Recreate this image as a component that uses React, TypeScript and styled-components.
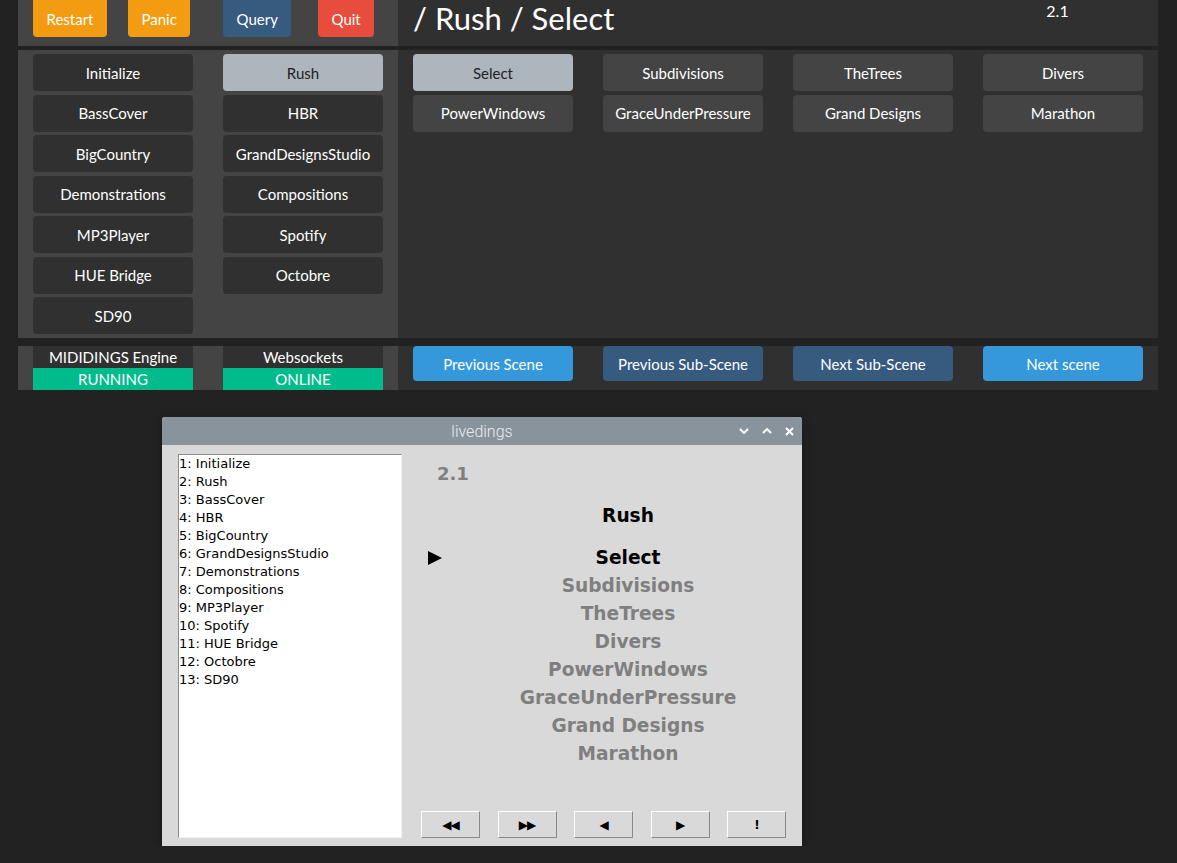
import React from "react";
import styled, { createGlobalStyle } from "styled-components";

type Variant = "warning" | "primary" | "danger" | "info" | "dark" | "secondary" | "light";

const colors: Record<Variant, { bg: string; fg: string }> = {
  warning: { bg: "#f39c12", fg: "#fff" },
  primary: { bg: "#375a7f", fg: "#fff" },
  danger: { bg: "#e74c3c", fg: "#fff" },
  info: { bg: "#3498db", fg: "#fff" },
  dark: { bg: "#303030", fg: "#fff" },
  secondary: { bg: "#444444", fg: "#fff" },
  light: { bg: "#adb5bd", fg: "#222" },
};

const scenes = [
  "Initialize",
  "Rush",
  "BassCover",
  "HBR",
  "BigCountry",
  "GrandDesignsStudio",
  "Demonstrations",
  "Compositions",
  "MP3Player",
  "Spotify",
  "HUE Bridge",
  "Octobre",
  "SD90",
];

const subScenes = [
  "Select",
  "Subdivisions",
  "TheTrees",
  "Divers",
  "PowerWindows",
  "GraceUnderPressure",
  "Grand Designs",
  "Marathon",
];

function App() {
  const currentScene = "Rush";
  const currentSub = "Select";

  return (
    <>
      <GlobalStyle />
      <Shell>
        <Band $h={46} $gap={4}>
          <LeftPanel>
            <ControlGrid>
              <Btn $variant="warning" $h={37} $top>Restart</Btn>
              <Btn $variant="warning" $h={37} $top>Panic</Btn>
              <Btn $variant="primary" $h={37} $top>Query</Btn>
              <Btn $variant="danger" $h={37} $top>Quit</Btn>
            </ControlGrid>
          </LeftPanel>
          <RightPanel>
            <TitleGrid>
              <Title>/ Rush / Select</Title>
              <Version>2.1</Version>
            </TitleGrid>
          </RightPanel>
        </Band>

        <Band $h={288} $gap={8}>
          <LeftPanel>
            <ButtonGrid $cols={2}>
              {scenes.map((s) => (
                <Btn key={s} $variant={s === currentScene ? "light" : "dark"} $h={37}>
                  {s}
                </Btn>
              ))}
            </ButtonGrid>
          </LeftPanel>
          <RightPanel>
            <ButtonGrid $cols={4}>
              {subScenes.map((s) => (
                <Btn key={s} $variant={s === currentSub ? "light" : "secondary"} $h={37}>
                  {s}
                </Btn>
              ))}
            </ButtonGrid>
          </RightPanel>
        </Band>

        <Band $h={44} $gap={0}>
          <LeftPanel>
            <StatusGrid>
              <StatusBox>
                <StatusLabel>MIDIDINGS Engine</StatusLabel>
                <StatusValue>RUNNING</StatusValue>
              </StatusBox>
              <StatusBox>
                <StatusLabel>Websockets</StatusLabel>
                <StatusValue>ONLINE</StatusValue>
              </StatusBox>
            </StatusGrid>
          </LeftPanel>
          <RightPanel>
            <NavGrid>
              <Btn $variant="info" $h={35}>Previous Scene</Btn>
              <Btn $variant="primary" $h={35}>Previous Sub-Scene</Btn>
              <Btn $variant="primary" $h={35}>Next Sub-Scene</Btn>
              <Btn $variant="info" $h={35}>Next scene</Btn>
            </NavGrid>
          </RightPanel>
        </Band>
      </Shell>

      <Window>
        <WindowTitle>
          <span />
          <WindowName>livedings</WindowName>
          <WindowControls>
            <svg width="10" height="6" viewBox="0 0 10 6">
              <path d="M1 1 L5 5 L9 1" fill="none" stroke="#fff" strokeWidth="2" />
            </svg>
            <svg width="10" height="6" viewBox="0 0 10 6">
              <path d="M1 5 L5 1 L9 5" fill="none" stroke="#fff" strokeWidth="2" />
            </svg>
            <svg width="9" height="9" viewBox="0 0 9 9">
              <path d="M1 1 L8 8 M8 1 L1 8" fill="none" stroke="#fff" strokeWidth="2" />
            </svg>
          </WindowControls>
        </WindowTitle>
        <WindowBody>
          <ListBox>
            {scenes.map((s, i) => (
              <ListItem key={s}>
                {i + 1}: {s}
              </ListItem>
            ))}
          </ListBox>
          <ScenePane>
            <PaneVersion>2.1</PaneVersion>
            <SceneRow $gap={14}>
              <span />
              <SceneName $active>Rush</SceneName>
            </SceneRow>
            <SubList>
              {subScenes.map((s) => (
                <SceneRow key={s} $gap={0}>
                  <Marker>
                    {s === currentSub && (
                      <svg width="14" height="14" viewBox="0 0 14 14">
                        <polygon points="0,0 14,7 0,14" fill="#000" />
                      </svg>
                    )}
                  </Marker>
                  <SceneName $active={s === currentSub}>{s}</SceneName>
                </SceneRow>
              ))}
            </SubList>
            <TkButtons>
              <TkButton>◀◀</TkButton>
              <TkButton>▶▶</TkButton>
              <TkButton>◀</TkButton>
              <TkButton>▶</TkButton>
              <TkButton>!</TkButton>
            </TkButtons>
          </ScenePane>
        </WindowBody>
      </Window>
    </>
  );
}

export default App;

const GlobalStyle = createGlobalStyle`
  body {
    margin: 0;
    background: #222222;
    font-family: Lato, "Liberation Sans", sans-serif;
  }
`;

const Shell = styled.div`
  padding-left: 18px;
  width: 1140px;
`;

const Band = styled.div<{ $h: number; $gap: number }>`
  display: grid;
  grid-template-columns: 380px 760px;
  height: ${(p) => p.$h}px;
  margin-bottom: ${(p) => p.$gap}px;
`;

const LeftPanel = styled.div`
  background: #444444;
`;

const RightPanel = styled.div`
  background: #303030;
`;

const ControlGrid = styled.div`
  display: grid;
  grid-template-columns: repeat(4, 95px);
  padding-left: 15px;
  align-items: start;
  justify-items: start;
`;

const Btn = styled.button<{ $variant: Variant; $h: number; $top?: boolean }>`
  display: flex;
  align-items: center;
  justify-content: center;
  height: ${(p) => p.$h}px;
  padding: 0 13.5px;
  border: none;
  border-radius: ${(p) => (p.$top ? "0 0 4px 4px" : "4px")};
  background: ${(p) => colors[p.$variant].bg};
  color: ${(p) => colors[p.$variant].fg};
  font-family: Lato, "Liberation Sans", sans-serif;
  font-size: 15px;
  white-space: nowrap;
  cursor: pointer;
`;

const TitleGrid = styled.div`
  display: grid;
  grid-template-columns: 10fr 2fr;
  height: 100%;
`;

const Title = styled.h1`
  margin: 0;
  padding-left: 15px;
  font-size: 31px;
  line-height: 37px;
  font-weight: 400;
  color: #fff;
`;

const Version = styled.div`
  padding-left: 15px;
  font-size: 16px;
  line-height: 22px;
  color: #fff;
`;

const ButtonGrid = styled.div<{ $cols: number }>`
  display: grid;
  grid-template-columns: repeat(${(p) => p.$cols}, 160px);
  grid-auto-rows: 37px;
  column-gap: 30px;
  row-gap: 3.5px;
  padding: 4px 15px;
  align-content: start;
`;

const StatusGrid = styled.div`
  display: grid;
  grid-template-columns: repeat(2, 160px);
  column-gap: 30px;
  padding: 0 15px;
  height: 100%;
`;

const StatusBox = styled.div`
  display: flex;
  flex-direction: column;
`;

const StatusLabel = styled.div`
  height: 22px;
  line-height: 22px;
  background: #303030;
  color: #fff;
  text-align: center;
  font-size: 15px;
`;

const StatusValue = styled.div`
  height: 22px;
  line-height: 22px;
  background: #00bc8c;
  color: #fff;
  text-align: center;
  font-size: 15px;
`;

const NavGrid = styled.div`
  display: grid;
  grid-template-columns: repeat(4, 160px);
  column-gap: 30px;
  padding: 0 15px;
  align-items: start;
`;

const Window = styled.div`
  width: 640px;
  height: 429px;
  margin: 27px 0 0 162px;
  background: #d9d9d9;
  border-radius: 3px 3px 0 0;
  box-shadow: 0 3px 10px rgba(0, 0, 0, 0.35);
  overflow: hidden;
  font-family: "DejaVu Sans", sans-serif;
`;

const WindowTitle = styled.div`
  display: grid;
  grid-template-columns: 1fr auto 1fr;
  align-items: center;
  height: 28px;
  background: #89939b;
`;

const WindowName = styled.div`
  font-family: Roboto, "Liberation Sans", sans-serif;
  font-size: 16px;
  font-weight: 300;
  color: #e8ecef;
`;

const WindowControls = styled.div`
  justify-self: end;
  display: flex;
  align-items: center;
  gap: 13px;
  padding-right: 8px;
`;

const WindowBody = styled.div`
  display: flex;
  height: 401px;
  box-sizing: border-box;
  padding: 9px 0 8px 16px;
`;

const ListBox = styled.div`
  width: 224px;
  height: 384px;
  box-sizing: border-box;
  background: #fff;
  border: 1px solid;
  border-color: #8c8c8c #f2f2f2 #f2f2f2 #8c8c8c;
`;

const ListItem = styled.div`
  font-size: 13px;
  line-height: 18px;
  color: #000;
  white-space: nowrap;
`;

const ScenePane = styled.div`
  flex: 1;
  display: flex;
  flex-direction: column;
  padding: 6px 0 0 18px;
`;

const PaneVersion = styled.div`
  margin-left: 17px;
  font-size: 18px;
  line-height: 28px;
  font-weight: bold;
  color: #7f7f7f;
`;

const SceneRow = styled.div<{ $gap: number }>`
  display: grid;
  grid-template-columns: 34px 1fr;
  align-items: center;
  height: 28px;
  margin-top: ${(p) => p.$gap}px;
`;

const SubList = styled.div`
  margin-top: 14px;
`;

const Marker = styled.div`
  display: flex;
  align-items: center;
  padding-left: 8px;
`;

const SceneName = styled.div<{ $active?: boolean }>`
  text-align: center;
  font-size: 18.6px;
  line-height: 28px;
  font-weight: bold;
  color: ${(p) => (p.$active ? "#000" : "#7f7f7f")};
`;

const TkButtons = styled.div`
  display: flex;
  gap: 17.5px;
  margin-top: auto;
  margin-left: 1px;
`;

const TkButton = styled.button`
  width: 59px;
  height: 27px;
  padding: 0;
  background: #d9d9d9;
  border: 1px solid;
  border-color: #ffffff #8a8a8a #8a8a8a #ffffff;
  font-family: "DejaVu Sans", sans-serif;
  font-size: 12px;
  font-weight: bold;
  letter-spacing: -1px;
  color: #000;
  cursor: pointer;
`;
